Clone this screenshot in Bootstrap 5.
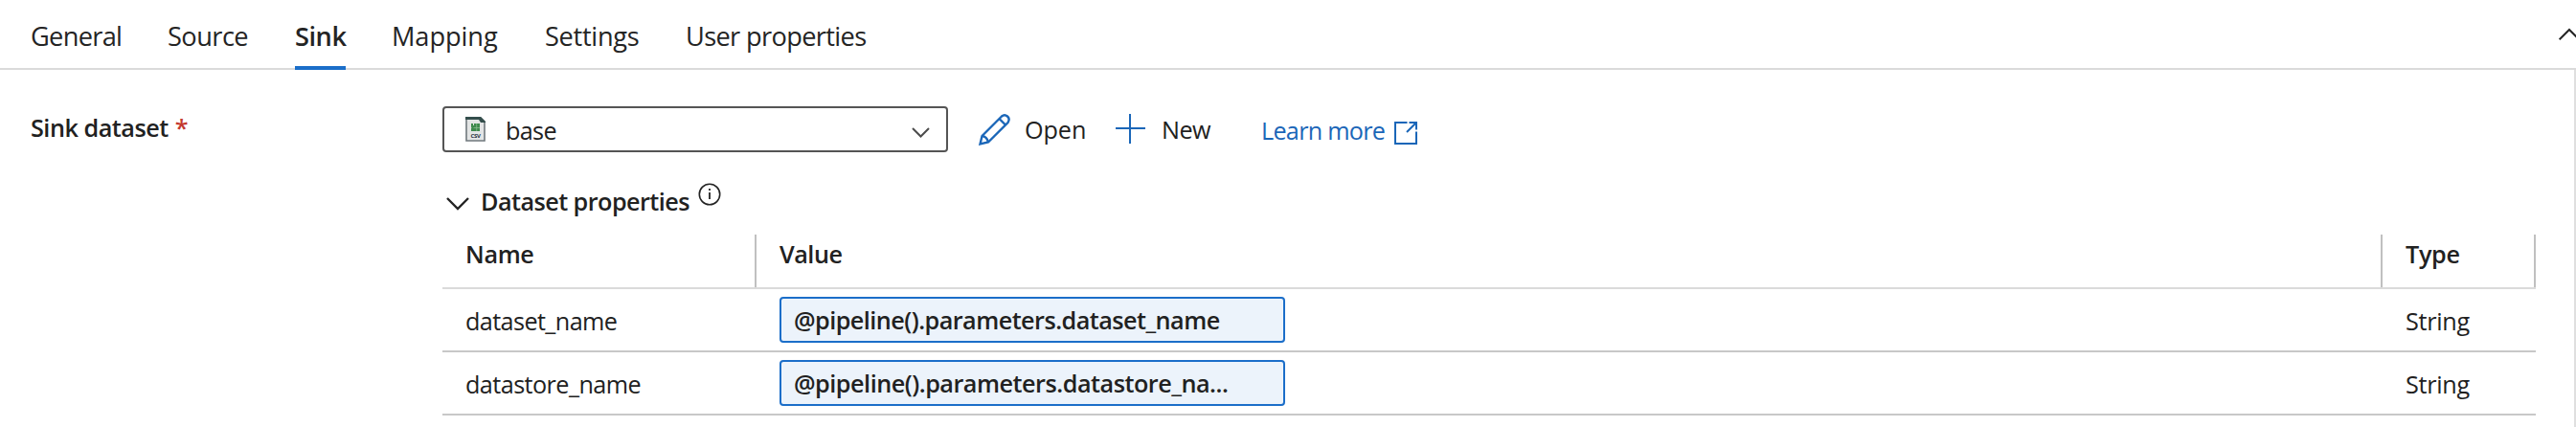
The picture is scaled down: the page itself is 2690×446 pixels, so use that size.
<!DOCTYPE html>
<html lang="en">
<head>
<meta charset="utf-8">
<title>Sink</title>
<link href="https://cdn.jsdelivr.net/npm/bootstrap@5.3.0/dist/css/bootstrap.min.css" rel="stylesheet">
<style>
body{font-family:"Open Sans","Noto Sans",sans-serif;font-size:25.2px;line-height:36px;color:#212121;background:#fff;overflow:hidden}
svg{display:block;flex:none;overflow:visible}
.page{height:446px;overflow:hidden}
.tabs{height:73px;border-bottom:2px solid #dadada;padding-left:32px;gap:48px;font-size:27.2px}
.tabs .nav-link{color:#242424;padding:20px 0 0;height:73px;border-bottom:4px solid transparent;white-space:nowrap;line-height:36px}
.tabs .nav-link.active{font-weight:600;border-bottom-color:#1b6ec9}
.collapse-btn{margin-right:-4px;padding-top:30px}
.panel{border-right:2px solid #dfdfdf;height:373px}
.field-label{width:430px;margin-left:32px;padding-top:42px;letter-spacing:-.48px}
.req{color:#c4392f;margin-left:7px}
.picker{width:528px;height:48px;border:2px solid #555;border-radius:4px;padding:0 17px 0 22px}
.fw-semi{font-weight:600}
.link-more{color:#1a66b8;letter-spacing:-.72px;padding-top:2px}
.props{width:2186px;margin-top:17px}
.props .line{display:grid;grid-template-columns:328px 1698px 160px;height:66px;border-bottom:2px solid #c8c8c8}
.props .head{height:57px;border-color:#dadada}
.props .head>div{border-right:2px solid #c0c0c0;padding:2px 24px 0;font-weight:600}
.props .line:not(.head)>div{padding:8px 24px 0}
.props .txt{line-height:51px}
.expr{width:528px;height:48px;line-height:44px;border:2px solid #1b6ec9;border-radius:4px;background:#ecf3fb;padding-left:13px;font-weight:600;white-space:nowrap}
</style>
</head>
<body>
<div class="page">
<nav class="nav tabs flex-nowrap">
  <a class="nav-link" href="#" style="width:95px;letter-spacing:-.69px">General</a>
  <a class="nav-link" href="#" style="width:85px;letter-spacing:-.54px">Source</a>
  <a class="nav-link active" href="#" style="width:53px;letter-spacing:-.47px">Sink</a>
  <a class="nav-link" href="#" style="width:112px;letter-spacing:-.08px">Mapping</a>
  <a class="nav-link" href="#" style="width:99px;letter-spacing:-.3px">Settings</a>
  <a class="nav-link" href="#" style="width:190px;letter-spacing:-.64px">User properties</a>
  <div class="collapse-btn ms-auto"><svg width="22" height="12" fill="none" stroke="#242424" stroke-width="2"><path d="M.7 11.3 11 1l10.3 10.3"/></svg></div>
</nav>
<main class="panel d-flex align-items-start">
  <div class="field-label fw-semi flex-shrink-0">Sink dataset<span class="req">*</span></div>
  <section style="padding-top:38px">
    <div class="d-flex align-items-center">
      <div class="picker d-flex align-items-center">
        <svg width="21" height="26" viewBox="0 0 21 26"><path d="M1 1h15l4 4v20H1z" fill="#e3e5e5" stroke="#70787d" stroke-width="1.6"/><path d="M0 0h16l5 5v1h-5l-2-3H0z" fill="#344e4c"/><path d="M6 7h2v2h1V7h6v8H6z" fill="#3f8a4d"/><path d="M8.5 11.5H15M11.7 7v8M6 11.5h1" stroke="#8fbf95" stroke-width=".7"/><text x="10.5" y="22.3" text-anchor="middle" font-family="Open Sans" font-size="6" font-weight="700" fill="#26323f" letter-spacing="-.3">CSV</text></svg>
        <span style="letter-spacing:-.67px;padding:1px 0 0 21px">base</span>
        <svg class="ms-auto" width="19" height="11" fill="none" stroke="#4c4c4c" stroke-width="2" style="margin-top:7px"><path d="m1 1 8.500 8.500L18 1"/></svg>
      </div>
      <svg style="margin:0 15px 0 32px" width="33" height="33" viewBox="0 0 33 33" fill="none" stroke="#1a66b8" stroke-width="2.4"><path d="M1.5 31.5 3.5 23 24 2.500Q27-.2 30 2.500t.5 6.500L10 29.500z"/><path d="m21.500 5 6.500 6.500M3.500 23q5 .5 6.500 6.500"/></svg>
      <span style="width:95px;letter-spacing:-.08px">Open</span>
      <svg width="31" height="31" style="margin-top:-2px" stroke="#1a66b8" stroke-width="2"><path d="M15 0v31M0 15h31"/></svg>
      <span style="width:121px;padding-left:17px;letter-spacing:-.5px">New</span>
      <a href="#" class="link-more d-flex align-items-center text-decoration-none"><span style="width:139px">Learn more</span>
      <svg width="24" height="24" fill="none" stroke="#1a66b8" stroke-width="2" style="margin-top:6px"><path d="M13.500 1H1v22h22V10.500M15.500 1H23v7.500M23 1 13 11"/></svg></a>
    </div>
    <div class="d-flex" style="padding:33px 0 0 4px">
      <svg width="24" height="13" fill="none" stroke="#242424" stroke-width="2.4" style="margin-top:14px"><path d="m1 1 11 11L23 1"/></svg>
      <span class="fw-semi" style="width:228px;padding-left:12px;letter-spacing:-.54px;white-space:nowrap">Dataset properties</span>
      <svg width="24" height="24" fill="none" stroke="#242424" stroke-width="1.6" style="margin:-1px 0 0 11px"><circle cx="12" cy="12" r="10.700"/><path d="M12 10v7M12 6v2" stroke-width="1.800"/></svg>
    </div>
    <div class="props">
      <div class="line head"><div style="letter-spacing:-.35px">Name</div><div style="letter-spacing:-.47px">Value</div><div style="letter-spacing:-.33px">Type</div></div>
      <div class="line"><div class="txt" style="letter-spacing:-.59px">dataset_name</div><div><div class="expr" style="letter-spacing:-.53px">@pipeline().parameters.dataset_name</div></div><div class="txt" style="letter-spacing:-.3px">String</div></div>
      <div class="line"><div class="txt" style="letter-spacing:-.56px">datastore_name</div><div><div class="expr" style="letter-spacing:-.48px">@pipeline().parameters.datastore_na...</div></div><div class="txt" style="letter-spacing:-.3px">String</div></div>
    </div>
  </section>
</main>
</div>
<script src="https://cdn.jsdelivr.net/npm/bootstrap@5.3.0/dist/js/bootstrap.bundle.min.js"></script>
</body>
</html>
